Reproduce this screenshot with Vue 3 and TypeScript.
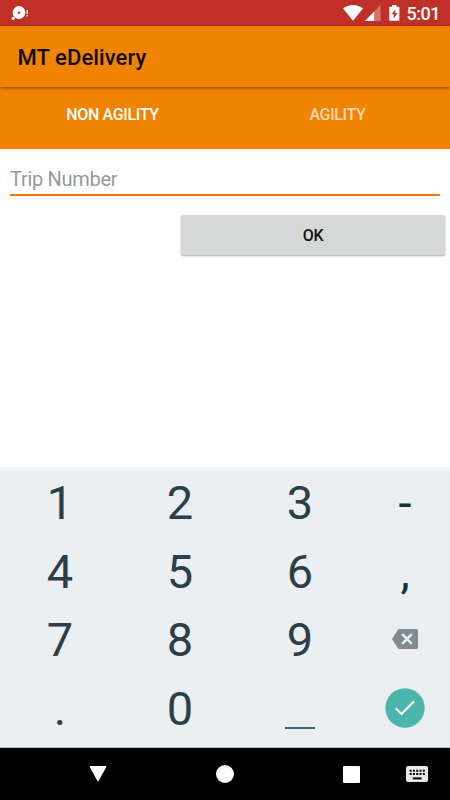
<script setup lang="ts">
import { ref } from 'vue'

type Key = { label: string; kind: 'digit' | 'mark' | 'delete' | 'space' | 'done' }

const tabs = ['NON AGILITY', 'AGILITY']
const activeTab = ref(0)
const tripNumber = ref('')

const digit = (label: string): Key => ({ label, kind: 'digit' })
const keys: Key[] = [
  digit('1'), digit('2'), digit('3'), { label: '-', kind: 'mark' },
  digit('4'), digit('5'), digit('6'), { label: ',', kind: 'mark' },
  digit('7'), digit('8'), digit('9'), { label: '', kind: 'delete' },
  digit('.'), digit('0'), { label: '', kind: 'space' }, { label: '', kind: 'done' },
]

function press(key: Key) {
  if (key.kind === 'delete') tripNumber.value = tripNumber.value.slice(0, -1)
  else if (key.kind === 'space') tripNumber.value += ' '
  else if (key.kind !== 'done') tripNumber.value += key.label
}
</script>

<template>
  <div class="screen">
    <header class="status">
      <svg class="notice" width="20" height="18" viewBox="0 0 20 18">
        <circle cx="9" cy="8.5" r="6.4" fill="#fff" />
        <circle cx="9" cy="8.7" r="1.2" fill="#c23128" />
        <circle cx="3.2" cy="14.4" r="1.7" fill="#fff" />
        <path d="M17.2 6v4M17.2 11v1.4" stroke="#fff" stroke-width="1.5" opacity=".85" />
      </svg>
      <div class="indicators">
        <svg class="wifi" width="20" height="16" viewBox="0 0 20 16">
          <path d="M0 3.6C6-1.2 14-1.2 20 3.6L10 15.8z" fill="#fff" />
        </svg>
        <svg class="signal" width="16" height="16" viewBox="0 0 16 16">
          <path d="M0 16 15.6 0v16z" fill="#fff" opacity=".32" />
          <path d="M0 16 9.2 6.5V16z" fill="#fff" />
        </svg>
        <svg class="battery" width="11" height="16" viewBox="0 0 11 16">
          <path d="M3.2 0h4.2v1.7h2.1q.9 0 .9.9v12.2q0 .9-.9.9H1.2q-.9 0-.9-.9V2.6q0-.9.9-.9h2z" fill="#fff" />
          <path d="M6.5 4 2.6 9.3h2.2v4.5L8.4 8.1H6z" fill="#c23128" />
        </svg>
        <span class="clock">5:01</span>
      </div>
    </header>

    <div class="appbar"><h1>MT eDelivery</h1></div>

    <nav class="tabs">
      <button
        v-for="(tab, i) in tabs"
        :key="tab"
        class="tab"
        :class="{ active: i === activeTab }"
        @click="activeTab = i"
      >{{ tab }}</button>
    </nav>

    <main class="form">
      <input v-model="tripNumber" class="field" placeholder="Trip Number" />
      <button class="ok">OK</button>
    </main>

    <section class="keypad">
      <button v-for="(key, i) in keys" :key="i" class="key" :class="key.kind" @click="press(key)">
        <svg v-if="key.kind === 'delete'" width="26" height="20" viewBox="0 0 26 20">
          <path d="M7.4 0H24.4Q26 0 26 1.6V18.4Q26 20 24.4 20H7.4Q6.4 20 5.8 19.1L0 10 5.8.9Q6.4 0 7.4 0z" fill="#7f8b8f" />
          <path d="m10.2 5.2 9.6 9.6m0-9.6-9.6 9.6" stroke="#eceff1" stroke-width="2.4" />
        </svg>
        <span v-else-if="key.kind === 'space'" class="bar"></span>
        <svg v-else-if="key.kind === 'done'" width="40" height="40" viewBox="0 0 40 40">
          <circle cx="20" cy="20" r="19.7" fill="#4db6ac" />
          <path d="m10.8 20.3 5.7 5.7L29 13.3" fill="none" stroke="#fff" stroke-width="2" />
        </svg>
        <template v-else>{{ key.label }}</template>
      </button>
    </section>

    <footer class="navbar">
      <svg class="back" width="18" height="16" viewBox="0 0 18 16">
        <path d="M1.2.7h15.6L9 14.8z" fill="#fff" stroke="#fff" stroke-width="1.2" stroke-linejoin="round" />
      </svg>
      <span class="home"></span>
      <span class="recent"></span>
      <svg class="keyboard" width="22" height="16" viewBox="0 0 22 16">
        <rect width="22" height="16" rx="2" fill="#e8e8e8" />
        <path d="M3.6 4.8h15.6M3.6 8h15.6" stroke="#000" stroke-width="2" stroke-dasharray="2 1.3" />
        <path d="M6.8 12.4h8.8" stroke="#000" stroke-width="2" />
      </svg>
    </footer>
  </div>
</template>

<style>
body {
  margin: 0;
}
</style>

<style scoped>
.screen {
  display: flex;
  flex-direction: column;
  width: 450px;
  height: 800px;
  overflow: hidden;
  background: #fff;
  font-family: Roboto, "Liberation Sans", sans-serif;
}
button {
  border: 0;
  padding: 0;
  background: none;
  font: inherit;
}
svg {
  display: block;
  flex: none;
}
.status {
  display: flex;
  justify-content: space-between;
  height: 26px;
  flex: none;
  box-sizing: border-box;
  padding: 4px 10px 0 10px;
  background: #c03028;
}
.indicators {
  display: flex;
  align-items: flex-start;
}
.indicators svg {
  margin-top: 1px;
}
.signal {
  margin-left: 2px;
}
.battery {
  margin-left: 8px;
}
.clock {
  margin-left: 7px;
  color: #fff;
  font-size: 18px;
  font-weight: 500;
  line-height: 20px;
  letter-spacing: -0.5px;
}
.appbar {
  position: relative;
  z-index: 1;
  display: flex;
  align-items: center;
  height: 61px;
  flex: none;
  padding: 2px 17.5px 0;
  box-sizing: border-box;
  background: #f08300;
  box-shadow: 0 1px 3px rgba(0, 0, 0, 0.45);
}
h1 {
  margin: 0;
  color: #120c00;
  font-size: 22px;
  font-weight: 500;
  line-height: 28px;
  letter-spacing: 0.1px;
}
.tabs {
  display: grid;
  grid-template-columns: 1fr 1fr;
  height: 62px;
  flex: none;
  box-sizing: border-box;
  padding-bottom: 8px;
  background: #f08300;
}
.tab {
  color: rgba(255, 255, 255, 0.7);
  font-size: 16px;
  font-weight: 500;
  letter-spacing: -0.35px;
}
.tab.active {
  color: #fff;
}
.form {
  display: flex;
  flex-direction: column;
  flex: 1;
  padding: 12px 5px 0 10px;
}
.field {
  height: 35px;
  box-sizing: border-box;
  margin-right: 5px;
  padding: 3px 0 0;
  border: 0;
  border-bottom: 2px solid #f27708;
  border-radius: 0;
  outline: 0;
  background: none;
  color: #212121;
  font: 400 20px Roboto, "Liberation Sans", sans-serif;
  letter-spacing: -0.3px;
}
.field::placeholder {
  color: #999;
  opacity: 1;
}
.ok {
  align-self: flex-end;
  width: 264px;
  height: 40px;
  margin-top: 19px;
  border-radius: 2px;
  background: #d6d7d7;
  box-shadow: 0 1px 2px rgba(0, 0, 0, 0.35);
  color: #111;
  font-size: 16px;
  font-weight: 500;
  letter-spacing: -0.3px;
}
.keypad {
  display: grid;
  grid-template-columns: 120px 120px 120px 90px;
  grid-template-rows: repeat(4, 68.6px);
  height: 281px;
  flex: none;
  box-sizing: border-box;
  padding-top: 1px;
  border-bottom: 1px solid #b4b6b7;
  background: #eceff1;
  box-shadow: inset 0 3px #f1f3f5;
}
.key {
  display: flex;
  align-items: center;
  justify-content: center;
  color: #2b3f49;
  font-size: 47px;
  line-height: 66px;
}
.key.digit,
.key.mark {
  padding-top: 2px;
}
.key.mark {
  color: #18343f;
}
.bar {
  width: 30px;
  height: 2px;
  margin-top: 40px;
  background: #4b626d;
}
.navbar {
  display: flex;
  align-items: center;
  height: 52px;
  flex: none;
  background: #000;
}
.back {
  margin-left: 89px;
}
.home {
  width: 18px;
  height: 18px;
  margin-left: 109px;
  border-radius: 50%;
  background: #fff;
}
.recent {
  width: 17px;
  height: 17px;
  margin-left: 109px;
  border-radius: 1px;
  background: #fff;
}
.keyboard {
  margin-left: 46px;
}
</style>
